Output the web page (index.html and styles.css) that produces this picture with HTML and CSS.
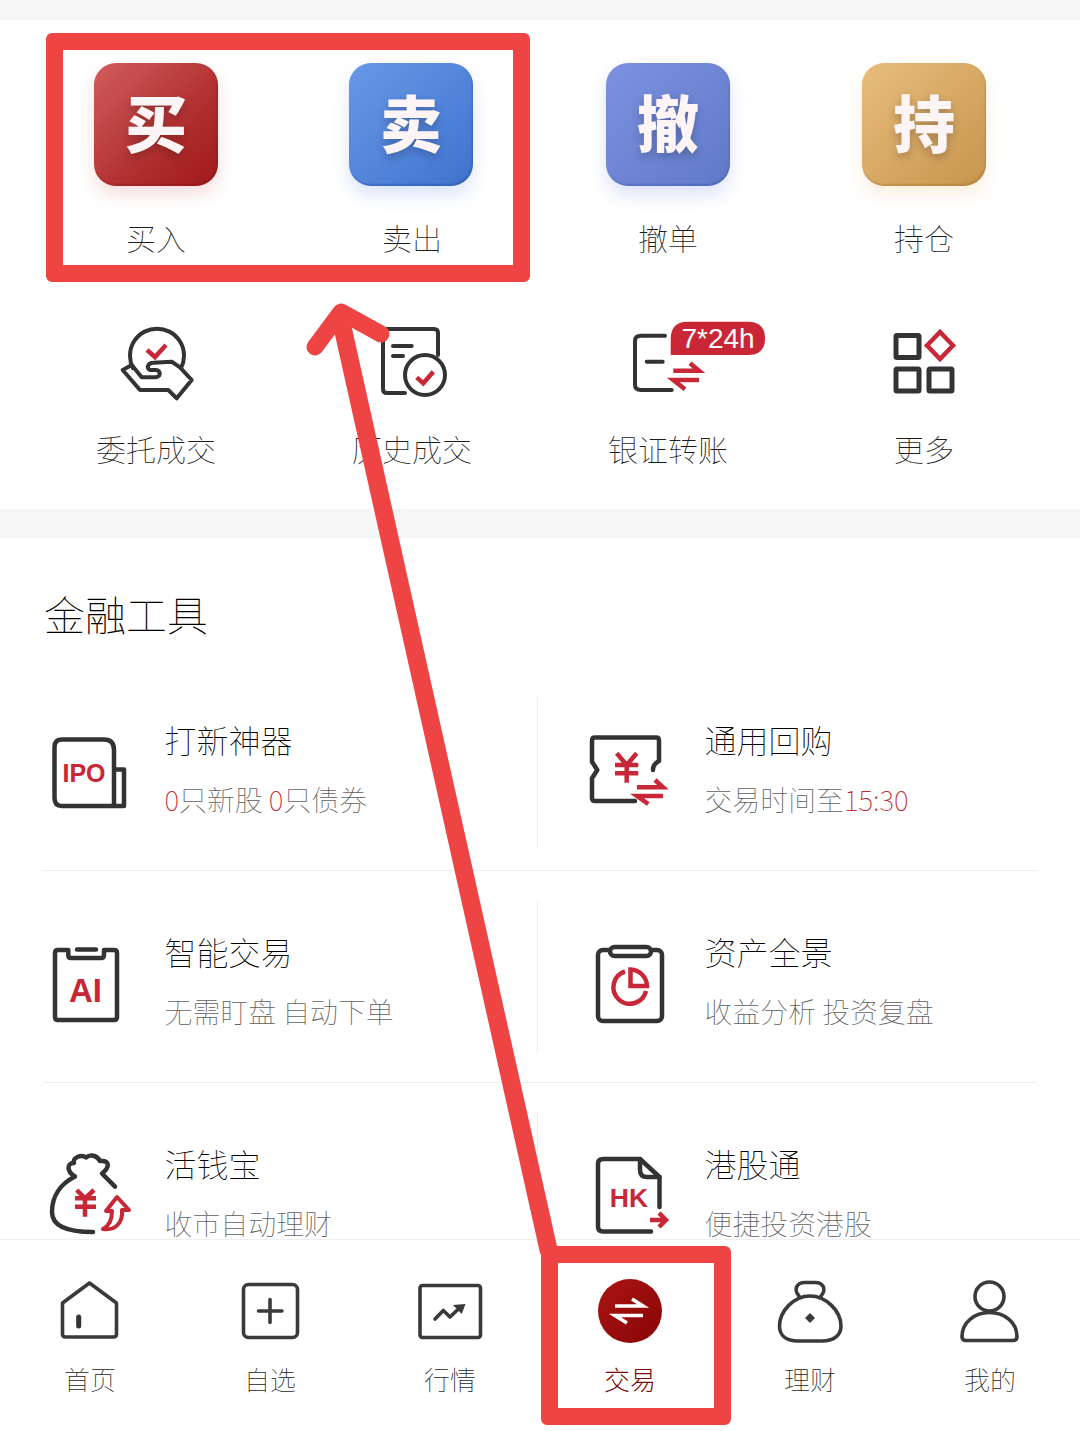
FILE: index.html
```html
<!DOCTYPE html>
<html lang="zh-CN">
<head>
<meta charset="utf-8">
<title>交易</title>
<link rel="stylesheet" href="styles.css">
</head>
<body>
<div class="app">
  <main class="main">
    <div class="band band-top"></div>
    <section class="quick">
      <a class="q-item"><span class="tile tile-red">买</span><span class="q-label q-label-tile">买入</span></a>
      <a class="q-item"><span class="tile tile-blue">卖</span><span class="q-label q-label-tile">卖出</span></a>
      <a class="q-item"><span class="tile tile-indigo">撤</span><span class="q-label q-label-tile">撤单</span></a>
      <a class="q-item"><span class="tile tile-gold">持</span><span class="q-label q-label-tile">持仓</span></a>

      <a class="q-item">
        <svg class="q-icon" viewBox="56 314 200 90">
          <path class="ink" d="M133,368 A27,27 0 1 1 181,368"/>
          <path class="red" d="M147,350 L155,357 L166,345"/>
          <path class="ink" d="M171.7,361.7 L180,367.3 L191.7,380 L176.7,398.3 L168.3,390 H140 L122.7,370 L131.7,365 L141.7,377.3 H156 C161,377 161,370 156,370 H150 C146,368 148,362.7 153.3,362.7 Z"/>
        </svg>
        <span class="q-label">委托成交</span>
      </a>
      <a class="q-item">
        <svg class="q-icon" viewBox="312 314 200 90">
          <path class="ink" d="M405,393 H387 Q383,393 383,389 V333 Q383,329 387,329 H434 Q438,329 438,333 V355"/>
          <path class="ink" d="M393,346 H411.7 M393,356 H403"/>
          <circle class="ink" cx="425" cy="375" r="20"/>
          <path class="red" d="M416.7,377.3 L423.3,383.3 L433.3,371.7"/>
        </svg>
        <span class="q-label">历史成交</span>
      </a>
      <a class="q-item">
        <svg class="q-icon" viewBox="568 314 200 90">
          <path class="ink" d="M665,335.7 H641 Q635,335.7 635,341 V385 Q635,390 641,390 H671.7 M646.7,361.7 H662.7"/>
          <path class="red" d="M673.3,370.7 H699 L690,363.3 M699,380 H673.3 L685,389.3"/>
          <path class="badge" d="M670.7,355 V338.7 Q670.7,321.7 687.7,321.7 H748 Q765,321.7 765,338.4 Q765,355 748,355 Z"/>
          <text class="badge-text" x="718" y="348">7*24h</text>
        </svg>
        <span class="q-label">银证转账</span>
      </a>
      <a class="q-item">
        <svg class="q-icon" viewBox="824 314 200 90">
          <rect class="ink thick" x="896" y="335.5" width="23" height="22" rx="1"/>
          <rect class="ink thick" x="896" y="369" width="23" height="22" rx="1"/>
          <rect class="ink thick" x="929" y="369" width="23" height="22" rx="1"/>
          <path class="red" d="M940,332 L953,345.5 L940,359 L927,345.5 Z"/>
        </svg>
        <span class="q-label">更多</span>
      </a>
    </section>
    <div class="band band-mid"></div>

    <section class="tools">
      <h2 class="tools-title">金融工具</h2>

      <div class="row">
        <div class="cell cell-left">
          <svg class="t-icon" viewBox="44 722 100 100">
            <path class="ink" d="M115,806 H62 Q54.5,806 54.5,798 V747 Q54.5,739.5 62,739.5 H104 Q114,739.5 114,750 V806 H124 V769.5 H114"/>
            <text class="t-mark" x="84" y="782" font-size="25">IPO</text>
          </svg>
          <div class="t-text"><div class="t-title">打新神器</div><div class="t-sub"><span class="hl">0</span>只新股 <span class="hl">0</span>只债券</div></div>
        </div>
        <div class="vline vline-first"></div>
        <div class="cell cell-right">
          <svg class="t-icon" viewBox="584 722 100 100">
            <path class="ink" d="M635,801 H595 Q592,801 592,798 V778.3 L597.3,770 L592,761.7 V740.7 Q592,737.5 595,737.5 H656 Q659,737.5 659,740.7 V761 Q653,764 653,770"/>
            <path class="red" d="M616.7,753.3 L626.7,765 L636.7,753.3 M615,765 H638.3 M615,773.3 H638.3 M626.7,765 V782.7"/>
            <path class="red" d="M637,787.3 H663 L655,780 M663,796 H637 L648.3,804"/>
          </svg>
          <div class="t-text"><div class="t-title">通用回购</div><div class="t-sub">交易时间至<span class="hl">15:30</span></div></div>
        </div>
      </div>

      <div class="row">
        <div class="cell cell-left">
          <svg class="t-icon" viewBox="44 934 100 100">
            <path class="ink" d="M68.3,950 H58 Q55,950 55,953 V1017 Q55,1020 58,1020 H114 Q117,1020 117,1017 V953 Q117,950 114,950 H104 V955 Q104,958 101,958 H71 Q68.3,958 68.3,955 Z M77,949.5 H96"/>
            <text class="t-mark" x="85.5" y="1002" font-size="33">AI</text>
          </svg>
          <div class="t-text"><div class="t-title">智能交易</div><div class="t-sub">无需盯盘 自动下单</div></div>
        </div>
        <div class="vline"></div>
        <div class="cell cell-right">
          <svg class="t-icon" viewBox="584 934 100 100">
            <rect class="ink" x="598" y="950" width="64" height="71" rx="5"/>
            <rect class="ink fillw" x="610" y="947" width="41" height="9" rx="4.5"/>
            <path class="red" d="M625,971.5 A16.5,16.5 0 1 0 646,991"/>
            <path class="red" d="M630.5,969.5 A17,17 0 0 1 647,986 H630.5 Z"/>
          </svg>
          <div class="t-text"><div class="t-title">资产全景</div><div class="t-sub">收益分析 投资复盘</div></div>
        </div>
      </div>

      <div class="row row-last">
        <div class="cell cell-left">
          <svg class="t-icon" viewBox="44 1146 100 100">
            <path class="ink" d="M115,1186.7 L102,1173.5 C110,1167 110,1160 100,1161 C97,1155 90,1154 86,1157.5 C81,1154 72,1158 74,1163 C66,1163 67,1172 75,1176.5 C60,1184 52,1197 52,1212 C52,1224 62,1232 93,1232"/>
            <path class="red" d="M76.7,1190 L85,1198.3 L94,1190 M75,1198.3 H96 M75,1206.7 H96 M85,1198.3 V1216.7"/>
            <path class="red red-round" d="M117,1197 L106,1211 H112 C112,1220 109,1226 103,1229 C116,1231 123,1222 122,1210 H129 Z"/>
          </svg>
          <div class="t-text"><div class="t-title">活钱宝</div><div class="t-sub">收市自动理财</div></div>
        </div>
        <div class="vline vline-last"></div>
        <div class="cell cell-right">
          <svg class="t-icon" viewBox="584 1146 100 100">
            <path class="ink" d="M651,1231.5 H603 Q598,1231.5 598,1226.5 V1164 Q598,1159 603,1159 H640 L659.5,1177 V1207"/>
            <path class="ink" d="M640,1159 V1170 Q640,1177 647,1177 H659.5"/>
            <text class="t-mark" x="629" y="1207" font-size="26.5">HK</text>
            <path class="red" d="M650,1220 H666 M659,1213 L666,1220 L659,1227"/>
          </svg>
          <div class="t-text"><div class="t-title">港股通</div><div class="t-sub">便捷投资港股</div></div>
        </div>
      </div>
    </section>
  </main>

  <nav class="nav">
    <a class="nav-item">
      <svg class="nav-icon" viewBox="50 1275 80 70">
        <path class="ink nav-line" d="M89.5,1283 L116.5,1303 V1334 Q116.5,1337 113.5,1337 H65.5 Q62.5,1337 62.5,1334 V1303 Z"/>
        <path class="ink thick" d="M78.7,1317 V1326"/>
      </svg>
      <span class="nav-label">首页</span>
    </a>
    <a class="nav-item">
      <svg class="nav-icon" viewBox="230 1275 80 70">
        <rect class="ink nav-line" x="243.5" y="1284.5" width="54" height="53" rx="5"/>
        <path class="ink nav-line" d="M258.5,1311 H282 M270,1299.5 V1322.5"/>
      </svg>
      <span class="nav-label">自选</span>
    </a>
    <a class="nav-item">
      <svg class="nav-icon" viewBox="410 1275 80 70">
        <rect class="ink nav-line" x="420" y="1285.5" width="60.5" height="52" rx="2.5"/>
        <path class="ink nav-line" d="M435,1319 L443.3,1310.5 L450,1317 L460,1307.5"/>
        <path class="solid" d="M453,1305 L465.5,1304 L461.7,1314 Z"/>
      </svg>
      <span class="nav-label">行情</span>
    </a>
    <a class="nav-item nav-active">
      <svg class="nav-icon" viewBox="590 1275 80 70">
        <defs>
          <linearGradient id="tradeFill" x1="0" y1="0" x2="1" y2="1">
            <stop offset="0" stop-color="#ab1414"/>
            <stop offset="1" stop-color="#870505"/>
          </linearGradient>
        </defs>
        <circle cx="630" cy="1311" r="32" fill="url(#tradeFill)"/>
        <path class="arrows-white" d="M615,1306 H643 L632,1299 M643,1315.5 H615 L627,1323"/>
      </svg>
      <span class="nav-label">交易</span>
    </a>
    <a class="nav-item">
      <svg class="nav-icon" viewBox="770 1275 80 70">
        <path class="ink nav-line" d="M810,1296 C826,1296 841,1311 841,1326 C841,1336 833,1341 822,1341 H798 C787,1341 779.5,1336 779.5,1326 C779.5,1311 794,1296 810,1296 Z"/>
        <path class="ink nav-line" d="M799,1296 C793,1289 797,1282.5 805,1282.5 H815 C823,1282.5 827,1289 821,1296"/>
        <path class="solid" d="M810,1313 L815,1318 L810,1323 L805,1318 Z"/>
      </svg>
      <span class="nav-label">理财</span>
    </a>
    <a class="nav-item">
      <svg class="nav-icon" viewBox="950 1275 80 70">
        <circle class="ink nav-line" cx="989.5" cy="1296.5" r="14.5"/>
        <path class="ink nav-line" d="M966,1340.5 Q962,1340.5 962,1336.5 C962,1322 975,1312.5 989.5,1312.5 S1017,1322 1017,1336.5 Q1017,1340.5 1013,1340.5 Z"/>
      </svg>
      <span class="nav-label">我的</span>
    </a>
  </nav>

  <svg class="annot-arrow" viewBox="0 0 1080 1431">
    <path d="M315,347 L341,312 L381,334"/>
    <path class="shaft" d="M340,316 L549,1252"/>
  </svg>
  <div class="frame frame-buy"></div>
  <div class="frame frame-trade"></div>
</div>
</body>
</html>
```

FILE: styles.css
```css
* { box-sizing: border-box; }
html, body { margin: 0; padding: 0; background: #fff; }
body {
  font-family: "Noto Sans CJK SC", "Noto Sans", sans-serif;
  font-weight: 100;
  color: #222;
}
.app {
  position: relative;
  width: 1080px;
  height: 1431px;
  overflow: hidden;
  display: flex;
  flex-direction: column;
  background: #fff;
}
.main { flex: 1; min-height: 0; }
.band { background: #f6f6f6; }
.band-top { height: 20px; }
.band-mid { height: 29px; }

/* quick actions */
.quick {
  height: 489px;
  padding: 43px 28px 0;
  display: grid;
  grid-template-columns: repeat(4, 256px);
  grid-auto-rows: max-content;
  row-gap: 57px;
}
.q-item { display: flex; flex-direction: column; align-items: center; }
.tile {
  width: 124px;
  height: 123px;
  border-radius: 22px;
  display: block;
  text-align: center;
  font-size: 62px;
  line-height: 116px;
  font-weight: 900;
  color: #fdf5f5;
  text-shadow: 0 4px 8px rgba(0, 0, 0, .22);
}
.tile-red { background: linear-gradient(135deg, #d25c5e 0%, #ae2c2c 65%, #a01a1a 100%); box-shadow: inset -1px -2px 2px rgba(120, 0, 0, .25), 0 9px 18px rgba(200, 50, 50, .16); }
.tile-blue { margin-left: -2px; background: linear-gradient(135deg, #6898e6 0%, #4b7ed6 70%, #3f72c8 100%); box-shadow: inset -1px -2px 2px rgba(0, 40, 120, .25), 0 9px 18px rgba(70, 120, 230, .2); }
.tile-indigo { background: linear-gradient(135deg, #7c92e0 0%, #6079c8 100%); box-shadow: inset -1px -2px 2px rgba(20, 40, 130, .2), 0 9px 18px rgba(90, 110, 220, .2); }
.tile-gold { background: linear-gradient(135deg, #e8bd7c 0%, #c7954e 100%); box-shadow: inset -1px -2px 2px rgba(130, 80, 10, .25), 0 9px 18px rgba(230, 170, 90, .18); }
.q-label {
  display: block;
  font-size: 30px;
  line-height: 40px;
  margin-top: 24px;
  color: #1c1c1c;
}
.q-label-tile { margin-top: 31px; }
.q-icon { width: 200px; height: 90px; display: block; }
.q-icon .ink { stroke-width: 4; }
.q-icon .ink.thick { stroke-width: 5; }

/* svg strokes */
.ink, .red {
  fill: none;
  stroke-width: 4.5;
  stroke-linecap: round;
  stroke-linejoin: round;
}
.ink { stroke: #333; }
.red { stroke: #c82737; stroke-linecap: butt; stroke-linejoin: miter; }
.red-round { stroke-linejoin: round; stroke-width: 4; }
.thick { stroke-width: 5; }
.fillw { fill: #fff; }
.nav-line { stroke-width: 3.6; stroke: #3a3a3a; }
.solid { fill: #3a3a3a; }
.badge { fill: #c92736; }
.badge-text {
  font-family: "Liberation Sans", sans-serif;
  font-size: 28px;
  font-weight: 400;
  fill: #fff;
  text-anchor: middle;
}
.t-mark {
  font-family: "Liberation Sans", sans-serif;
  font-weight: 700;
  fill: #c82737;
  text-anchor: middle;
}
.arrows-white { fill: none; stroke: #fff; stroke-width: 3.6; }

/* tools */
.tools { padding: 0 43px; }
.tools-title {
  margin: 0;
  padding: 45px 0 16px 1px;
  font-size: 41px;
  line-height: 60px;
  font-weight: 100;
  color: #000;
}
.row {
  height: 212px;
  display: grid;
  grid-template-columns: 494px 1px 1fr;
  border-bottom: 1px solid #eeeeee;
}
.row-last { height: 156px; border-bottom: 0; }
.vline { background: #eeeeee; margin: 30px 0; }
.vline-first { margin: 38px 0 22px; }
.vline-last { margin: 29px 0 0; }
.cell { display: flex; align-items: flex-start; }
.cell-left { padding-left: 1px; }
.cell-right { padding-left: 46px; }
.t-icon { width: 100px; height: 100px; margin: 63px 20.5px 0 0; flex: none; }
.t-text { padding-top: 60px; }
.t-title { font-size: 32px; line-height: 40px; color: #000; }
.t-sub { font-size: 27.9px; line-height: 28px; margin-top: 26px; color: #606060; white-space: pre; }
.hl { color: #c22a30; }

/* bottom nav */
.nav {
  position: relative;
  flex: none;
  height: 192px;
  border-top: 1px solid #efefef;
  background: #fff;
  display: grid;
  grid-template-columns: repeat(6, 180px);
}
.nav-item { display: flex; flex-direction: column; align-items: center; padding-top: 35px; }
.nav-icon { width: 80px; height: 70px; display: block; }
.nav-label { font-size: 26px; line-height: 36px; margin-top: 16px; color: #1c1c1c; }
.nav-active .nav-label { color: #7a0c0c; font-weight: 300; }

/* annotation overlay */
.annot-arrow {
  position: absolute;
  left: 0;
  top: 0;
  width: 1080px;
  height: 1431px;
  pointer-events: none;
}
.annot-arrow path {
  fill: none;
  stroke: #ee4444;
  stroke-width: 17;
  stroke-linecap: round;
  stroke-linejoin: round;
}
.annot-arrow .shaft { stroke-width: 18; stroke-linecap: butt; }
.frame {
  position: absolute;
  border: 17px solid #ee4444;
  border-radius: 6px;
}
.frame-buy { left: 46px; top: 33px; width: 484px; height: 249px; }
.frame-trade { left: 541px; top: 1246px; width: 190px; height: 179px; }
```
